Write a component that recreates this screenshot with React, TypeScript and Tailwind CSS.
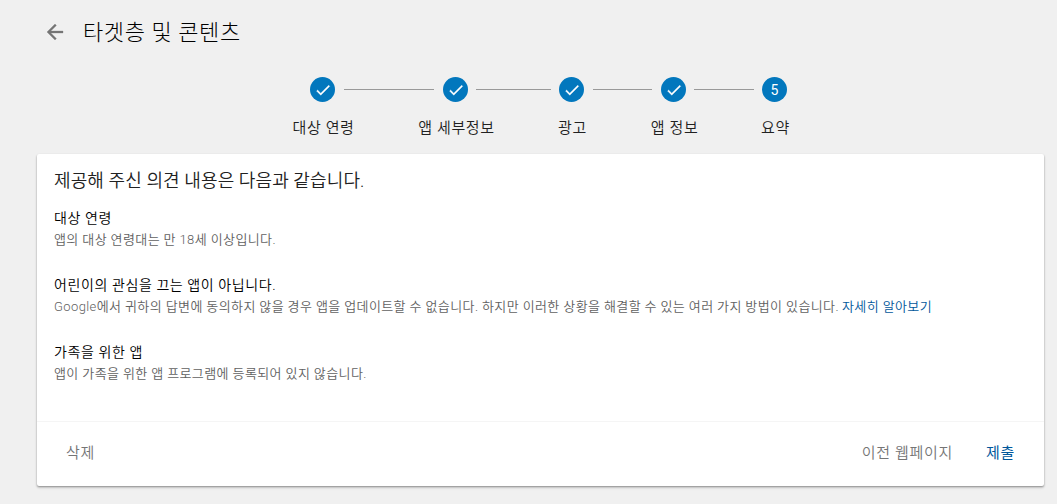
import { Fragment } from "react"

const steps = [
  { label: "대상 연령", line: "w-[90px] mx-[9px]" },
  { label: "앱 세부정보", line: "w-[75px] mx-2" },
  { label: "광고", line: "w-[59px] mx-[9px]" },
  { label: "앱 정보", line: "w-[60px] mx-2" },
  { label: "요약", line: "" },
]

const sections = [
  {
    title: "대상 연령",
    text: "앱의 대상 연령대는 만 18세 이상입니다.",
  },
  {
    title: "어린이의 관심을 끄는 앱이 아닙니다.",
    text: "Google에서 귀하의 답변에 동의하지 않을 경우 앱을 업데이트할 수 없습니다. 하지만 이러한 상황을 해결할 수 있는 여러 가지 방법이 있습니다.",
    link: "자세히 알아보기",
  },
  {
    title: "가족을 위한 앱",
    text: "앱이 가족을 위한 앱 프로그램에 등록되어 있지 않습니다.",
  },
]

function BackIcon() {
  return (
    <svg viewBox="0 0 24 24" className="size-6 fill-[#757575] stroke-[#757575] stroke-[0.3]">
      <path d="M20 11H7.83l5.59-5.59L12 4l-8 8 8 8 1.41-1.41L7.83 13H20v-2z" />
    </svg>
  )
}

function CheckIcon() {
  return (
    <svg viewBox="0 0 24 24" className="size-[18px] fill-white stroke-white stroke-[0.4]">
      <path d="M9 16.17L4.83 12l-1.42 1.41L9 19 21 7l-1.41-1.41z" />
    </svg>
  )
}

function Stepper() {
  return (
    <div className="flex h-[77px] pt-[1px] pl-[310px]">
      {steps.map((step, index) => (
        <Fragment key={step.label}>
          <div className="flex w-[25px] shrink-0 flex-col items-center">
            <div className="flex size-[25px] items-center justify-center rounded-full bg-[#0277bd] text-sm text-white">
              {index < steps.length - 1 ? <CheckIcon /> : index + 1}
            </div>
            <span className="mt-[15px] pl-[2px] text-[15px] leading-[22px] font-[350] tracking-[0.65px] whitespace-nowrap">
              {step.label}
            </span>
          </div>
          {step.line && <div className={`mt-3 h-px shrink-0 bg-[#999] ${step.line}`} />}
        </Fragment>
      ))}
    </div>
  )
}

export default function App() {
  return (
    <div className="h-[504px] overflow-hidden bg-[#f0f0f0] font-[Roboto,'Noto_Sans_CJK_KR',sans-serif] text-[#212121]">
      <header className="flex h-[76px] items-center pb-3 pl-[43px]">
        <BackIcon />
        <h1 className="ml-4 pt-px text-[22px] leading-8 font-light tracking-[0.6px] whitespace-nowrap text-black">
          타겟층 및 콘텐츠
        </h1>
      </header>

      <Stepper />

      <main className="mt-[1px] ml-[37px] flex h-[332px] w-[1007px] flex-col rounded-[2px] bg-white shadow-[0_1px_2px_rgba(0,0,0,0.35),0_2px_3px_rgba(0,0,0,0.1)]">
        <div className="h-[267px] px-[17px] pt-[14px] whitespace-nowrap">
          <h2 className="text-lg leading-[26px] font-[350] tracking-[0.12px]">제공해 주신 의견 내용은 다음과 같습니다.</h2>
          <div className="mt-[13px] flex flex-col gap-[23px]">
            {sections.map((section) => (
              <section key={section.title}>
                <h3 className="text-sm leading-[22px] font-[350] tracking-[0.6px] text-black">{section.title}</h3>
                <p className="text-[13px] leading-[22px] font-[350] tracking-[0.4px] text-[#616161]">
                  {section.text}
                  {section.link && (
                    <a href="#" className="ml-[3px] text-[#01579b]">
                      {section.link}
                    </a>
                  )}
                </p>
              </section>
            ))}
          </div>
        </div>
        <footer className="flex flex-1 items-center border-t border-[#f5f5f5] px-[29px] pb-[2px] text-[15px] font-[350] tracking-[0.7px] text-[#757575]">
          <button>삭제</button>
          <button className="ml-auto">이전 웹페이지</button>
          <button className="ml-[33px] font-normal text-[#01579b]">제출</button>
        </footer>
      </main>
    </div>
  )
}
